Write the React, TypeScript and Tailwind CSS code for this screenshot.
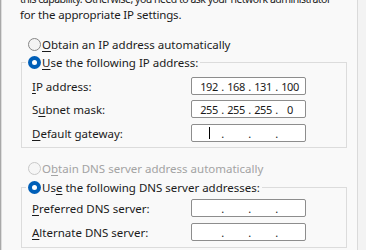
import React from "react";

function Radio({ checked, disabled }: { checked?: boolean; disabled?: boolean }) {
  if (checked) {
    return (
      <span className="w-[13px] h-[13px] rounded-full bg-[#005fb8] flex items-center justify-center shrink-0">
        <span className="w-[5px] h-[5px] rounded-full bg-white" />
      </span>
    );
  }
  if (disabled) {
    return <span className="w-[13px] h-[13px] rounded-full border border-[#c8c8c8] bg-[#f6f6f6] shrink-0" />;
  }
  return <span className="w-[13px] h-[13px] rounded-full border border-[#868686] bg-[#f3f3f3] shrink-0" />;
}

function IpBox({ parts, caret }: { parts?: string[]; caret?: boolean }) {
  const p = parts ?? ["", "", "", ""];
  return (
    <div className="w-[115px] h-[18px] border border-[#8d8d8d] rounded-[2px] bg-white flex items-center pl-[6px] text-[11px] tracking-[-0.4px] text-[#1a1a1a]">
      {p.map((v, i) => (
        <React.Fragment key={i}>
          {i > 0 && <span className="w-[5px] text-center">.</span>}
          <span className="w-[22px] text-center flex justify-center items-center h-[16px]">
            {i === 0 && caret ? <span className="w-[1px] h-[12px] bg-black" /> : v}
          </span>
        </React.Fragment>
      ))}
    </div>
  );
}

function Row({ label, children }: { label: React.ReactNode; children: React.ReactNode }) {
  return (
    <div className="flex items-center">
      <span className="w-[169px] pl-[10px]">{label}</span>
      {children}
    </div>
  );
}

export default function App() {
  return (
    <div className="w-[366px] h-[250px] overflow-hidden flex bg-[#f9f9f9] text-[11.5px] leading-[15px] text-[#1b1b1b] font-['Noto_Sans',sans-serif]">
      <div className="w-[1px] bg-[#a9a9a9]" />
      <div className="w-[1px] bg-[#dedede]" />

      <div className="flex-1 flex flex-col">
        <p className="mt-[-8px] pl-[18px] whitespace-nowrap flex flex-col">
          <span className="text-[10.5px] tracking-[-0.5px]">
            this capability. Otherwise, you need to ask your network administrator
          </span>
          <span className="tracking-[-0.15px]">for the appropriate IP settings.</span>
        </p>

        <label className="mt-[15px] pl-[26px] flex items-center gap-[1px]">
          <Radio />
          <span>
            <u className="underline-offset-2">O</u>btain an IP address automatically
          </span>
        </label>

        <fieldset className="mt-[3px] ml-[19px] mr-[10px] border border-[#dcdcdc] pt-[7px] pb-[5px] flex flex-col gap-[5px]">
          <legend className="ml-[4px] px-[2px] flex items-center gap-[1px] bg-[#f9f9f9]">
            <Radio checked />
            <span>
              <u className="underline-offset-2">U</u>se the following IP address:
            </span>
          </legend>
          <Row label={<><u className="underline-offset-2">I</u>P address:</>}>
            <IpBox parts={["192", "168", "131", "100"]} />
          </Row>
          <Row label={<>S<u className="underline-offset-2">u</u>bnet mask:</>}>
            <IpBox parts={["255", "255", "255", "0"]} />
          </Row>
          <div className="mt-[1px]">
            <Row label={<><u className="underline-offset-2">D</u>efault gateway:</>}>
              <IpBox caret />
            </Row>
          </div>
        </fieldset>

        <label className="mt-[13px] pl-[26px] flex items-center gap-[1px] text-[#a3a3a3]">
          <Radio disabled />
          <span>
            O<u className="underline-offset-2">b</u>tain DNS server address automatically
          </span>
        </label>

        <fieldset className="mt-[4px] ml-[19px] mr-[10px] border border-[#dcdcdc] pt-[4px] pb-[6px] flex flex-col gap-[6px]">
          <legend className="ml-[4px] px-[2px] flex items-center gap-[1px] bg-[#f9f9f9]">
            <Radio checked />
            <span>
              Us<u className="underline-offset-2">e</u> the following DNS server addresses:
            </span>
          </legend>
          <Row label={<><u className="underline-offset-2">P</u>referred DNS server:</>}>
            <IpBox />
          </Row>
          <Row label={<><u className="underline-offset-2">A</u>lternate DNS server:</>}>
            <IpBox />
          </Row>
        </fieldset>
      </div>

      <div className="w-[9px] border-l border-[#dadada] bg-[#f3f3f3]" />
    </div>
  );
}
